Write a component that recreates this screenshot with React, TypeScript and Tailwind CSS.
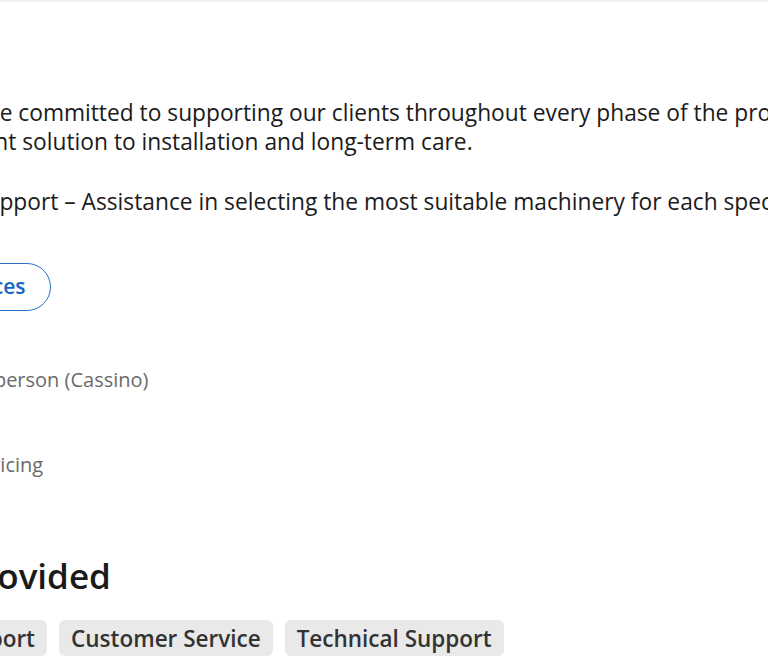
import { useState } from "react";

const tags = ["Support", "Customer Service", "Technical Support"];

export default function App() {
  const [active, setActive] = useState<string | null>(null);

  return (
    <div className="min-h-screen w-full overflow-hidden bg-white font-['Open_Sans',sans-serif] text-[#1b1b1b]">
      {/* header strip */}
      <div className="h-[2px] w-full bg-[#efefeb]" />

      {/* content column (left side is scrolled out of view) */}
      <section className="-ml-[62px] flex w-[1400px] flex-col items-start pt-[96px]">
        <p className="text-[22.75px] leading-[29px]">
          We are committed to supporting our clients throughout every phase of
          the project, from choosing the most
          <br />
          elegant solution to installation and long-term care.
        </p>

        <ul className="mt-[31px] list-disc pl-[35px] text-[22.75px] leading-[29px]">
          <li>
            Support – Assistance in selecting the most suitable machinery for
            each specific need.
          </li>
        </ul>

        <button className="-ml-[20px] mt-[47px] flex h-[48px] items-center rounded-full border-[1.5px] border-[#2a72c6] px-6 text-[21px] font-semibold text-[#1565c0]">
          Services
        </button>

        {/* contact info */}
        <div className="mt-[56px] flex flex-col text-[20px] leading-[26px] text-[#6a6a6a]">
          <span className="pl-[8px]">Salesperson (Cassino)</span>
          <span className="mt-[59px] pl-[22px]">Servicing</span>
        </div>

        <h2 className="mt-[78px] -ml-[124px] text-[35px] font-semibold leading-[40px] text-[#1a1a1a]">
          Services Provided
        </h2>

        <div className="-ml-[2px] mt-[24px] flex gap-3">
          {tags.map((t) => (
            <button
              key={t}
              onClick={() => setActive(t)}
              className={`rounded-md px-3 pt-[5px] pb-[3px] text-[22.5px] font-semibold leading-[28px] text-[#333333] ${
                active === t ? "bg-[#dcdcdc]" : "bg-[#e9e9e9]"
              }`}
            >
              {t}
            </button>
          ))}
        </div>
      </section>
    </div>
  );
}
